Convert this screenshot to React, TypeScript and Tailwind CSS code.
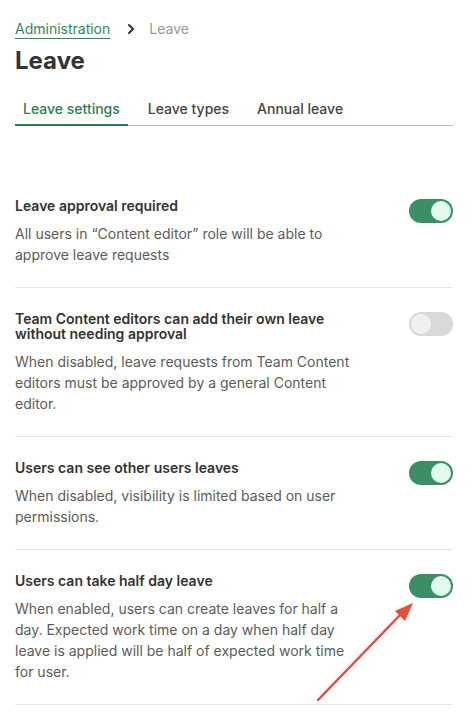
import React from 'react'

type Setting = {
  title: string
  description: string
  enabled: boolean
}

const settings: Setting[] = [
  {
    title: 'Leave approval required',
    description: 'All users in “Content editor” role will be able to approve leave requests',
    enabled: true,
  },
  {
    title: 'Team Content editors can add their own leave without needing approval',
    description:
      'When disabled, leave requests from Team Content editors must be approved by a general Content editor.',
    enabled: false,
  },
  {
    title: 'Users can see other users leaves',
    description: 'When disabled, visibility is limited based on user permissions.',
    enabled: true,
  },
  {
    title: 'Users can take half day leave',
    description:
      'When enabled, users can create leaves for half a day. Expected work time on a day when half day leave is applied will be half of expected work time for user.',
    enabled: true,
  },
]

function Toggle({ enabled }: { enabled: boolean }) {
  return (
    <button
      type="button"
      className={
        enabled
          ? 'flex h-6 w-11 shrink-0 items-center justify-end rounded-full bg-[#3a8f64] p-[2px]'
          : 'flex h-6 w-11 shrink-0 items-center justify-start rounded-full bg-[#d9d9d9] p-[2px]'
      }
    >
      <span
        className={
          enabled
            ? 'h-5 w-5 rounded-full bg-[#e2fbef]'
            : 'h-5 w-5 rounded-full bg-[#f0f0f0]'
        }
      />
    </button>
  )
}

export default function App() {
  return (
    <div
      className="relative min-h-[715px] w-[472px] bg-white pl-[15px] pr-[19px] pt-[19px]"
      style={{ fontFamily: 'Inter, "Noto Sans", sans-serif' }}
    >
      {/* breadcrumb */}
      <div className="flex items-center text-sm leading-5">
        <a className="text-[#2f8a5b] underline decoration-1 underline-offset-[4px]">Administration</a>
        <svg className="ml-[15px] h-3 w-3 text-[#333]" viewBox="0 0 12 12" fill="none" stroke="currentColor" strokeWidth={2}>
          <path d="M4 2l4 4-4 4" strokeLinecap="round" strokeLinejoin="round" />
        </svg>
        <span className="ml-[12px] text-[#9a9a9a]">Leave</span>
      </div>

      <h1 className="mt-[6px] text-2xl font-bold leading-8 text-[#333]">Leave</h1>

      {/* tabs */}
      <div className="mt-[22px] flex gap-3 border-b border-[#bdbdbd] text-sm leading-5">
        <div className="-mb-px border-b-2 border-[#2e7d55] px-2 pb-[5px] font-medium text-[#2e7d55]">Leave settings</div>
        <div className="px-2 pb-[5px] font-medium text-[#444]">Leave types</div>
        <div className="px-2 pb-[5px] font-medium text-[#444]">Annual leave</div>
      </div>

      {/* settings */}
      <div className="mt-[49px]">
        {settings.map((s) => (
          <div key={s.title} className="flex justify-between border-b border-[#e6e6e6] pb-[22px] pt-6">
            <div className="-mt-[24px] w-[344px] pt-[23px]">
              <div className="text-sm font-semibold leading-[15px] text-[#333]">{s.title}</div>
              <p className="mt-2.5 text-sm leading-[21px] text-[#5c5c5c]">{s.description}</p>
            </div>
            <Toggle enabled={s.enabled} />
          </div>
        ))}
      </div>

      {/* annotation arrow */}
      <svg className="pointer-events-none absolute left-0 top-0" width="472" height="715" viewBox="0 0 472 715">
        <line x1="318" y1="700" x2="402" y2="613" stroke="#e74c3c" strokeWidth="2.5" strokeLinecap="round" />
        <polygon points="413,603 395,611 405,621" fill="#e74c3c" />
      </svg>
    </div>
  )
}
